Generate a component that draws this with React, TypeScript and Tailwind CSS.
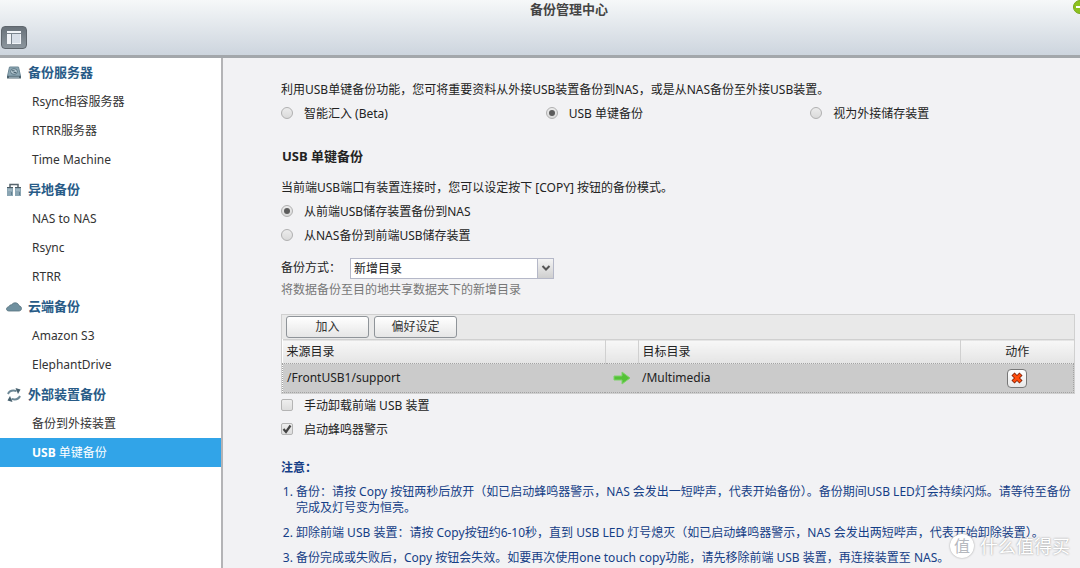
import React, { useState } from 'react';

const menu = [
  { title: '备份服务器', icon: 'disk', items: ['Rsync相容服务器', 'RTRR服务器', 'Time Machine'] },
  { title: '异地备份', icon: 'servers', items: ['NAS to NAS', 'Rsync', 'RTRR'] },
  { title: '云端备份', icon: 'cloud', items: ['Amazon S3', 'ElephantDrive'] },
  { title: '外部装置备份', icon: 'sync', items: ['备份到外接装置', 'USB 单键备份'] },
];

const jobs = [{ source: '/FrontUSB1/support', target: '/Multimedia' }];

const GroupIcon = ({ name }: { name: string }) => (
  <svg viewBox="0 0 16 14" className="h-[14px] w-4 shrink-0">
    {name === 'disk' && (
      <>
        <path d="M3.500 1h9L14.500 10h-13z" fill="#8ba6b3" stroke="#6c8795" />
        <ellipse cx="8" cy="5.5" rx="3.4" ry="2.8" fill="#b9ccd5" stroke="#4b6472" strokeWidth=".8" />
        <path d="M6 4.800h2.600M7.600 6.400h2.600" stroke="#3f5866" />
        <path d="M1 10h14v2.500H1z" fill="#4e6470" />
        <path d="M3 11.200h10" stroke="#a8bcc6" />
      </>
    )}
    {name === 'servers' && (
      <>
        <path d="M4 4V1.500h8V4" fill="none" stroke="#57656e" strokeWidth="1.5" />
        <path d="M1 4h6v9H1zM9 4h6v9H9z" fill="#8aa5b3" />
        <path d="M1 4.500h6M9 4.500h6" stroke="#4a5a64" />
        <path d="M2 7h4M10 7h4" stroke="#b4c6cf" />
        <path d="M5.500 9v3M13.500 9v3" stroke="#627f8e" />
      </>
    )}
    {name === 'cloud' && (
      <path
        d="M3 11C1.400 11 .5 10.200.5 9S1.600 6.700 3 6.700c.2-1.200 1.300-2 2.600-1.800C6.300 3.500 7.700 2.800 9.200 2.800c2 0 3.500 1.300 3.800 3 1.500.2 2.500 1.300 2.500 2.700S14.400 11 12.900 11z"
        fill="#6f909f"
        stroke="#56717e"
        strokeWidth=".8"
      />
    )}
    {name === 'sync' && (
      <>
        <path d="M2 6C3.200 3.200 6.500 2 10.500 3" fill="none" stroke="#6d8896" strokeWidth="2" />
        <path d="M9.500 0l5 1.500-2.500 4.500z" fill="#46606e" />
        <path d="M14 8c-1.200 2.800-4.500 4-8.500 3" fill="none" stroke="#6d8896" strokeWidth="2" />
        <path d="M6.500 14l-5-1.500L4 8z" fill="#46606e" />
      </>
    )}
  </svg>
);

type ChoiceProps = {
  label: string;
  name: string;
  checked: boolean;
  onChange: () => void;
};

const Radio = ({ label, name, checked, onChange }: ChoiceProps) => (
  <label className="flex h-6 items-center gap-[11px]">
    <span className="grid size-3 shrink-0 -translate-y-px place-items-center">
      <input
        type="radio"
        name={name}
        checked={checked}
        onChange={onChange}
        className="col-start-1 row-start-1 size-3 appearance-none rounded-full border border-[#b0b0b0] bg-linear-to-b from-[#ececec] to-[#dadada]"
      />
      {checked && <span className="pointer-events-none col-start-1 row-start-1 size-[6px] rounded-full bg-[#5c5c5c]" />}
    </span>
    {label}
  </label>
);

const Checkbox = ({ label, name, checked, onChange }: ChoiceProps) => (
  <label className="flex h-6 items-center gap-[11px]">
    <span className="grid size-3 shrink-0 -translate-y-px place-items-center">
      <input
        type="checkbox"
        name={name}
        checked={checked}
        onChange={onChange}
        className="col-start-1 row-start-1 size-3 appearance-none rounded-[2px] border border-[#b4b4b4] bg-linear-to-b from-[#eeeeee] to-[#dddddd]"
      />
      {checked && (
        <svg viewBox="0 0 12 12" className="pointer-events-none col-start-1 row-start-1 size-3">
          <path d="M2.500 6l2.500 3 4.500-6.500" fill="none" stroke="#444" strokeWidth="2.2" />
        </svg>
      )}
    </span>
    {label}
  </label>
);

const App = () => {
  const [active, setActive] = useState('USB 单键备份');
  const [mode, setMode] = useState('USB 单键备份');
  const [direction, setDirection] = useState('从前端USB储存装置备份到NAS');
  const [unmount, setUnmount] = useState(false);
  const [buzzer, setBuzzer] = useState(true);

  return (
    <div
      lang="zh-CN"
      className="relative flex h-screen flex-col overflow-hidden bg-[#f2f2f4] font-['Noto_Sans','Noto_Sans_CJK_SC',sans-serif] text-xs text-[#222222]"
    >
      <header className="relative flex h-[58px] shrink-0 flex-col justify-between border-b-[3px] border-[#a3a7ab] bg-linear-to-b from-[#f6f8f9] to-[#cdd5de]">
        <h1 className="pl-[58px] text-center text-[13px] leading-[18px] font-bold text-[#444444]">备份管理中心</h1>
        <button
          type="button"
          aria-label="切换菜单"
          className="mb-[6px] ml-px flex h-[23px] w-[26px] items-center justify-center rounded-[4px] border border-[#5f666d] bg-linear-to-b from-[#69727a] to-[#8c969e]"
        >
          <svg viewBox="0 0 14 13" className="h-[13px] w-[14px]">
            <path d="M0 0h14v13H0z" fill="#f1f4f8" />
            <path d="M5 3h8v9H5z" fill="#d8dfe8" />
            <path d="M0 2.500h14M4.500 3v10" stroke="#7b858e" />
          </svg>
        </button>
        <button type="button" aria-label="最小化" className="absolute top-0 -right-[7px]">
          <svg viewBox="0 0 14 14" className="size-[14px]">
            <circle cx="7" cy="7" r="6.5" fill="#8dc21f" stroke="#76a51b" />
            <path d="M3 7h8" stroke="#fff" strokeWidth="2" />
          </svg>
        </button>
      </header>

      <div className="flex min-h-0 flex-1">
        <nav className="flex w-[223px] shrink-0 flex-col gap-px border-r-2 border-[#b4b4b6] bg-white">
          {menu.map((group) => (
            <section key={group.title}>
              <h2 className="flex h-[29px] items-center gap-[6px] pl-[6px] text-[13px] font-bold text-[#285b87]">
                <GroupIcon name={group.icon} />
                {group.title}
              </h2>
              <ul>
                {group.items.map((item) => (
                  <li key={item}>
                    <a
                      href="#"
                      onClick={() => setActive(item)}
                      className={
                        item === active
                          ? 'flex h-[29px] items-center bg-[#31a4e8] pl-8 text-white'
                          : 'flex h-[29px] items-center pl-8 text-[#333333]'
                      }
                    >
                      {item === active ? (
                        <span>
                          <span className="font-bold">{item.slice(0, 3)}</span>
                          {item.slice(3)}
                        </span>
                      ) : (
                        item
                      )}
                    </a>
                  </li>
                ))}
              </ul>
            </section>
          ))}
        </nav>

        <main className="min-w-0 flex-1 overflow-hidden pt-5 pl-[58px]">
          <p className="leading-6">
            利用USB单键备份功能，您可将重要资料从外接USB装置备份到NAS，或是从NAS备份至外接USB装置。
          </p>
          <div className="mr-[5px] grid grid-cols-3">
            {['智能汇入 (Beta)', 'USB 单键备份', '视为外接储存装置'].map((label) => (
              <Radio key={label} name="mode" label={label} checked={mode === label} onChange={() => setMode(label)} />
            ))}
          </div>

          <h2 className="mt-[18px] pl-px text-[13px] leading-6 font-bold">USB 单键备份</h2>
          <p className="mt-2 leading-6">当前端USB端口有装置连接时，您可以设定按下 [COPY] 按钮的备份模式。</p>
          {['从前端USB储存装置备份到NAS', '从NAS备份到前端USB储存装置'].map((label) => (
            <Radio
              key={label}
              name="direction"
              label={label}
              checked={direction === label}
              onChange={() => setDirection(label)}
            />
          ))}

          <div className="mt-2 flex h-6 items-center">
            <label htmlFor="method" className="w-[69px]">
              备份方式：
            </label>
            <div className="relative h-[21px] w-[204px]">
              <select
                id="method"
                className="h-full w-full appearance-none border border-[#b5b8c8] bg-white pr-5 pl-[3px] text-xs leading-5"
              >
                <option>新增目录</option>
              </select>
              <span className="pointer-events-none absolute inset-y-px right-px flex w-4 items-center justify-center border-l border-[#b5b8c8] bg-linear-to-b from-[#f4f4f4] to-[#cfcfcf]">
                <svg viewBox="0 0 10 8" className="h-2 w-[10px]">
                  <path d="M1.500 2L5 5.500 8.500 2" fill="none" stroke="#555" strokeWidth="2" />
                </svg>
              </span>
            </div>
          </div>
          <p className="leading-5 text-[#777777]">将数据备份至目的地共享数据夹下的新增目录</p>

          <div className="mt-[14px] mr-[5px] border border-[#d0d0d0] bg-[#e9e9e9]">
            <div className="flex gap-[5px] py-px pl-1">
              {['加入', '偏好设定'].map((label) => (
                <button
                  key={label}
                  type="button"
                  className="h-[22px] w-[83px] rounded-[3px] border border-[#8f9499] bg-linear-to-b from-white to-[#e6e6e6] text-[#333333]"
                >
                  {label}
                </button>
              ))}
            </div>
            <table className="w-full table-fixed border-collapse bg-white text-left">
              <colgroup>
                <col />
                <col className="w-[33px]" />
                <col />
                <col className="w-[113px]" />
              </colgroup>
              <thead>
                <tr className="h-6 border-t border-[#d0d0d0] bg-linear-to-b from-[#f7f7f7] to-[#e4e4e4]">
                  <th className="border-r border-[#d0d0d0] pl-1 font-normal">来源目录</th>
                  <th className="border-r border-[#d0d0d0]" />
                  <th className="border-r border-[#d0d0d0] pl-1 font-normal">目标目录</th>
                  <th className="text-center font-normal">动作</th>
                </tr>
              </thead>
              <tbody>
                {jobs.map((job) => (
                  <tr key={job.source} className="h-[29px] border border-dotted border-[#a3a3a3] bg-[#cbcbcb]">
                    <td className="pl-1">{job.source}</td>
                    <td>
                      <svg viewBox="0 0 18 14" className="mx-auto h-[14px] w-[18px]">
                        <path
                          d="M1 5h8V1l8 6-8 6V9H1z"
                          fill="#55c238"
                          stroke="#7fd36a"
                          strokeLinejoin="round"
                        />
                      </svg>
                    </td>
                    <td className="pl-1">{job.target}</td>
                    <td>
                      <button
                        type="button"
                        aria-label="删除"
                        className="mx-auto flex h-[19px] w-5 items-center justify-center rounded-[4px] border border-[#777777] bg-linear-to-b from-white to-[#e8e8e8]"
                      >
                        <svg viewBox="0 0 12 12" className="size-3">
                          <path d="M2 2l8 8M10 2l-8 8" stroke="#7c1d05" strokeWidth="4.4" />
                          <path d="M2.500 2.500l7 7M9.500 2.500l-7 7" stroke="#ff4d0d" strokeWidth="2.8" />
                        </svg>
                      </button>
                    </td>
                  </tr>
                ))}
              </tbody>
            </table>
          </div>

          <Checkbox
            name="unmount"
            label="手动卸载前端 USB 装置"
            checked={unmount}
            onChange={() => setUnmount(!unmount)}
          />
          <Checkbox name="buzzer" label="启动蜂鸣器警示" checked={buzzer} onChange={() => setBuzzer(!buzzer)} />

          <div className="text-[#153e86]">
            <h3 className="mt-[14px] leading-6 font-bold">注意：</h3>
            <ol className="mt-1 flex list-decimal flex-col gap-[9px] pl-[15px] leading-4">
              <li>
                备份：请按 Copy 按钮两秒后放开（如已启动蜂鸣器警示，NAS 会发出一短哔声，代表开始备份）。备份期间USB
                LED灯会持续闪烁。请等待至备份完成及灯号变为恒亮。
              </li>
              <li>
                卸除前端 USB 装置：请按 Copy按钮约6-10秒，直到 USB LED 灯号熄灭（如已启动蜂鸣器警示，NAS
                会发出两短哔声，代表开始卸除装置）。
              </li>
              <li>
                备份完成或失败后，Copy 按钮会失效。如要再次使用one touch copy功能，请先移除前端 USB 装置，再连接装置至
                NAS。
              </li>
            </ol>
          </div>
        </main>
      </div>

      <div className="pointer-events-none absolute right-[10px] bottom-[10px] flex items-center gap-[6px] text-white">
        <span className="flex size-6 items-center justify-center rounded-full bg-white text-base text-[#b5b8be] shadow-[0_0_2px_#999999]">
          值
        </span>
        <span className="text-lg leading-6 [text-shadow:0_0_2px_#888888]">什么值得买</span>
      </div>
    </div>
  );
};

export default App;
